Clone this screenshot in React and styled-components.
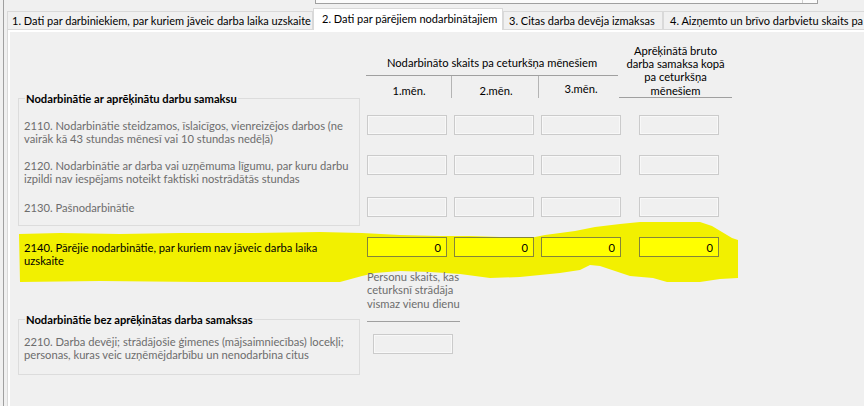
import React from "react";
import styled, { createGlobalStyle } from "styled-components";

const Global = createGlobalStyle`
  html, body {
    margin: 0;
    background: #f0f0f0;
    overflow: hidden;
  }
  body {
    font-family: Lato, "Liberation Sans", sans-serif;
    font-size: 11.2px;
    color: #000;
  }
`;

/* window frame */
const Frame = styled.div`
  height: 406px;
  margin-left: 3px;
  padding-left: 3px;
  border-left: 1px solid #a0a0a0;
  display: flex;
  flex-direction: column;
  box-sizing: border-box;
`;

const Combo = styled.div`
  margin-left: 308px;
  width: 503px;
  height: 4px;
  box-sizing: border-box;
  border: 1px solid #a0a0a0;
  border-top: none;
  background: #fbfbfb;
  display: flex;
  justify-content: flex-end;
`;

const ComboButton = styled.div`
  width: 14px;
  border-left: 1px solid #cfcfcf;
`;

/* tabs */
const TabStrip = styled.div`
  margin-top: 4px;
  height: 21px;
  display: flex;
  align-items: flex-end;
  position: relative;
  z-index: 1;
`;

const Tab = styled.div`
  flex: none;
  width: ${p => p.$w}px;
  height: ${p => (p.$active ? 22 : 18)}px;
  margin-bottom: ${p => (p.$active ? -1 : 0)}px;
  padding-left: ${p => p.$pad}px;
  box-sizing: border-box;
  border: 1px solid #d9d9d9;
  border-bottom: none;
  background: ${p => (p.$active ? "#fff" : "#f0f0f0")};
  font-size: 11px;
  line-height: ${p => (p.$active ? 19 : 17)}px;
  white-space: nowrap;
  overflow: hidden;
`;

const Panel = styled.div`
  flex: 1;
  border-top: 1px solid #d9d9d9;
  border-left: 1px solid #d9d9d9;
  padding: 2px 0 0 2px;
  background: #fff;
  display: flex;
  flex-direction: column;
`;

const Page = styled.div`
  flex: 1;
  position: relative;
  background: #f0f0f0;
  padding: 11px 0 0 8px;
`;

const Marker = styled.svg`
  position: absolute;
  left: 0;
  top: 0;
  z-index: 0;
`;

/* form grid */
const Form = styled.div`
  position: relative;
  z-index: 1;
  display: grid;
  grid-template-columns: 342px 80px 80px 80px 104px;
  grid-template-rows: 55px 17px 40px 42px 29px 11px 33px 43px 21px 41px;
  column-gap: 7px;
`;

const MonthsHead = styled.div`
  grid-column: 2 / 5;
  grid-row: 1;
  align-self: end;
`;

const HeadTitle = styled.div`
  text-align: center;
  line-height: 13px;
  padding-bottom: 6px;
  border-bottom: 1px solid #a0a0a0;
  margin-right: 3px;
  margin-left: -1px;
`;

const MonthRow = styled.div`
  display: grid;
  grid-template-columns: 84px 87px 1fr;
  height: 22px;
`;

const Month = styled.div`
  text-align: center;
  line-height: 13px;
  padding-top: ${p => p.$top}px;
  padding-left: ${p => (p.$first ? 0 : 2)}px;
  border-left: ${p => (p.$first ? "none" : "1px solid #b4b4b4")};
`;

const TotalHead = styled.div`
  grid-column: 5;
  grid-row: 1;
  align-self: end;
  margin-left: -9px;
  width: 113px;
  text-align: center;
  line-height: 13.3px;
  border-bottom: 1px solid #a0a0a0;
`;

const Group = styled.fieldset`
  grid-column: 1;
  grid-row: ${p => p.$rows};
  margin: ${p => p.$shift}px 0 0 0;
  padding: 0 0 0 6px;
  min-width: 0;
  border: 1px solid #dcdcdc;
  box-sizing: border-box;

  legend {
    padding: 0 1px;
    font-weight: bold;
    line-height: 13px;
    color: #000;
  }
`;

const Label = styled.div`
  grid-column: 1;
  grid-row: ${p => p.$row};
  padding: ${p => p.$top}px 0 0 6px;
  line-height: 13px;
  white-space: nowrap;
  color: ${p => (p.$muted ? "#6d6d6d" : "#000")};
`;

const Field = styled.input`
  grid-row: ${p => p.$row};
  grid-column: ${p => p.$col};
  align-self: start;
  margin: 0 0 0 ${p => p.$offset || 0}px;
  width: 80px;
  height: 20px;
  box-sizing: border-box;
  padding: 0 5px 0 2px;
  font: inherit;
  text-align: right;
  color: #000;
  outline: none;
  border: 1px solid ${p => (p.$on ? "#85853a" : "#cbcbcb")};
  background: ${p => (p.$on ? "#ffff00" : "#f0f0f0")};
  box-shadow: ${p => (p.$on ? "none" : "inset 0 0 0 1px #f8f8f8")};
`;

const Persons = styled.div`
  grid-column: 2;
  grid-row: 8 / 10;
  align-self: start;
  width: 93px;
  color: #6d6d6d;
`;

const PersonsText = styled.div`
  width: 86px;
  text-align: center;
  line-height: 13.3px;
  white-space: nowrap;
`;

const Rule = styled.div`
  margin-top: 11px;
  border-top: 1px solid #a0a0a0;
`;

const monthCols = [2, 3, 4, 5];

const Inputs = ({ row, on }) => monthCols.map(c =>
  <Field key={c} $row={row} $col={c} $offset={c === 5 ? 11 : 0} $on={on}
    readOnly value={on ? "0" : ""} />
);

export default function App() {
  return <>
    <Global />
    <Frame>
      <Combo><ComboButton /></Combo>
      <TabStrip>
        <Tab $w={306} $pad={4}>1. Dati par darbiniekiem, par kuriem jāveic darba laika uzskaite</Tab>
        <Tab $w={190} $pad={8} $active>2. Dati par pārējiem nodarbinātajiem</Tab>
        <Tab $w={160} $pad={5}>3. Citas darba devēja izmaksas</Tab>
        <Tab $w={240} $pad={6}>4. Aizņemto un brīvo darbvietu skaits pa ceturkšņa mēnešiem</Tab>
      </TabStrip>
      <Panel>
        <Page>
          <Marker width="854" height="374" viewBox="10 32 854 374">
            <path fill="#f2f000" d="M19 234 L60 233 L120 234 L180 233 L250 233 L320 232 L362 233 L400 235 L440 236
              L470 236 L500 237 L530 238 L545 235 L575 231 L595 227 L620 224 L640 222 L700 222 L712 226
              L722 232 L732 238 L738 240 L738 278 L720 279 L700 282 L667 282 L653 278 L630 276 L612 270
              L600 266 L590 265 L580 270 L560 273 L520 277 L490 278 L460 274 L430 272 L400 271 L375 273
              L362 276 L340 282 L200 282 L100 281 L20 282 Z" />
          </Marker>
          <Form>
            <MonthsHead>
              <HeadTitle>Nodarbināto skaits pa ceturkšņa mēnešiem</HeadTitle>
              <MonthRow>
                <Month $first $top={8}>1.mēn.</Month>
                <Month $top={8}>2.mēn.</Month>
                <Month $top={6}>3.mēn.</Month>
              </MonthRow>
            </MonthsHead>
            <TotalHead>
              Aprēķinātā bruto<br />darba samaksa kopā<br />pa ceturkšņa<br />mēnešiem
            </TotalHead>

            <Group $rows="2 / 6" $shift={-6}>
              <legend>Nodarbinātie ar aprēķinātu darbu samaksu</legend>
            </Group>
            <Label $row={3} $top={3.5} $muted>
              2110. Nodarbinātie steidzamos, īslaicīgos, vienreizējos darbos (ne<br />
              vairāk kā 43 stundas mēnesī vai 10 stundas nedēļā)
            </Label>
            <Inputs row={3} />
            <Label $row={4} $top={3.5} $muted>
              2120. Nodarbinātie ar darba vai uzņēmuma līgumu, par kuru darbu<br />
              izpildi nav iespējams noteikt faktiski nostrādātās stundas
            </Label>
            <Inputs row={4} />
            <Label $row={5} $top={3.5} $muted>2130. Pašnodarbinātie</Label>
            <Inputs row={5} />

            <Label $row={7} $top={4}>
              2140. Pārējie nodarbinātie, par kuriem nav jāveic darba laika<br />
              uzskaite
            </Label>
            <Inputs row={7} on />

            <Persons>
              <PersonsText>Personu skaits, kas<br />ceturksnī strādāja<br />vismaz vienu dienu</PersonsText>
              <Rule />
            </Persons>
            <Group $rows="9 / 11" $shift={0}>
              <legend>Nodarbinātie bez aprēķinātas darba samaksas</legend>
            </Group>
            <Label $row={10} $top={1} $muted>
              2210. Darba devēji; strādājošie ģimenes (mājsaimniecības) locekļi;<br />
              personas, kuras veic uzņēmējdarbību un nenodarbina citus
            </Label>
            <Field $row={10} $col={2} $offset={6} readOnly value="" />
          </Form>
        </Page>
      </Panel>
    </Frame>
  </>;
}
